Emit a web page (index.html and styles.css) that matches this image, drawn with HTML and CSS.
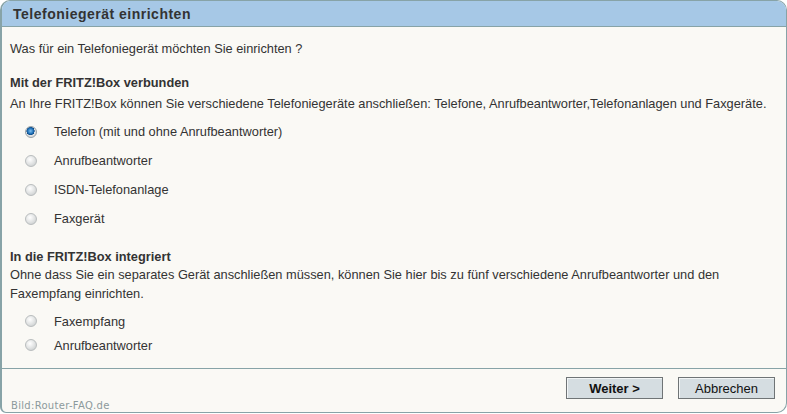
FILE: index.html
```html
<!DOCTYPE html>
<html lang="de">
<head>
<meta charset="UTF-8">
<title>Telefoniegerät einrichten</title>
<link rel="stylesheet" href="styles.css">
</head>
<body>
<div class="dialog">
    <div class="dialog-head">Telefoniegerät einrichten</div>
    <form class="dialog-body">
        <p class="intro">Was für ein Telefoniegerät möchten Sie einrichten ?</p>

        <h2>Mit der FRITZ!Box verbunden</h2>
        <p>An Ihre FRITZ!Box können Sie verschiedene Telefoniegeräte anschließen: Telefone, Anrufbeantworter,Telefonanlagen und Faxgeräte.</p>
        <div class="options wide">
            <label><input type="radio" name="device" value="fon" checked> Telefon (mit und ohne Anrufbeantworter)</label>
            <label><input type="radio" name="device" value="tam"> Anrufbeantworter</label>
            <label><input type="radio" name="device" value="isdn"> ISDN-Telefonanlage</label>
            <label><input type="radio" name="device" value="fax"> Faxgerät</label>
        </div>

        <h2 class="tight">In die FRITZ!Box integriert</h2>
        <p>Ohne dass Sie ein separates Gerät anschließen müssen, können Sie hier bis zu fünf verschiedene Anrufbeantworter und den Faxempfang einrichten.</p>
        <div class="options">
            <label><input type="radio" name="device" value="faxint"> Faxempfang</label>
            <label><input type="radio" name="device" value="tamint"> Anrufbeantworter</label>
        </div>
    </form>
    <div class="dialog-foot">
        <span class="credit">Bild:Router-FAQ.de</span>
        <div class="buttons">
            <button type="button" class="btn btn-main">Weiter &gt;</button>
            <button type="button" class="btn">Abbrechen</button>
        </div>
    </div>
</div>
</body>
</html>
```

FILE: styles.css
```css
/* dialog frame */
body {
    margin: 0;
    font-family: "Liberation Sans", Arial, sans-serif;
    font-size: 12.8px;
    color: #333;
    background: #fff;
}
.dialog {
    width: 784px;
    height: 411px;
    border: 1px solid #87a3a7;
    border-left-width: 2px;
    border-radius: 10px 10px 10px 6px;
    background-color: #faf9f5;
    display: flex;
    flex-direction: column;
    overflow: hidden;
}
.dialog-head {
    flex: none;
    height: 25px;
    line-height: 26px;
    padding-left: 11px;
    background-color: #a6c8e6;
    border-bottom: 1px solid #87a3a7;
    font-size: 14px;
    font-weight: bold;
    color: #333;
    letter-spacing: 0.5px;
}
.dialog-body {
    flex: 1;
    min-height: 0;
    padding: 0 4px 0 8px;
}
p {
    margin: 0;
    line-height: 19px;
}
.intro {
    margin-top: 12px;
    margin-bottom: 15px;
}
h2 {
    margin: 0 0 2px;
    font-size: 12.8px;
    font-weight: bold;
    line-height: 19px;
}
h2.tight {
    margin-bottom: -1px;
}
.options {
    display: flex;
    flex-direction: column;
    padding: 6px 0 14px 13px;
}
.options label {
    display: flex;
    align-items: center;
    height: 24px;
}
.options.wide label {
    height: 29px;
}
.options.wide {
    padding-top: 4px;
    padding-bottom: 14px;
}

/* radio look */
input[type="radio"] {
    appearance: none;
    -webkit-appearance: none;
    width: 12px;
    height: 12px;
    margin: 0 17px 0 2px;
    border-radius: 50%;
    border: 1px solid #b9bdbe;
    background: radial-gradient(circle at 40% 35%, #ffffff 0%, #e2e4e4 50%, #c2c6c7 100%);
}
input[type="radio"]:checked {
    border-color: #9aa3a8;
    background: radial-gradient(circle at 45% 40%, #7fc0f0 0%, #1d6fb6 35%, #0d4a86 48%, #e4e6e7 52%, #c5c9cb 100%);
}

/* footer with buttons */
.dialog-foot {
    flex: none;
    height: 43px;
    border-top: 1px solid #87a3a7;
    display: flex;
    justify-content: space-between;
    padding: 0 11px 0 9px;
}
.credit {
    align-self: flex-end;
    font-family: "DejaVu Sans", sans-serif;
    font-size: 10px;
    line-height: 12px;
    color: #8c9a9c;
    letter-spacing: 0.3px;
}
.buttons {
    display: flex;
    gap: 15px;
    padding-top: 8px;
}
.btn {
    width: 97px;
    height: 22px;
    padding: 0;
    font-family: "Liberation Sans", Arial, sans-serif;
    font-size: 13px;
    color: #111;
    background-color: #d5dde1;
    border: 1px solid #6f7476;
    box-shadow: inset 1px 1px 0 #f2f5f6;
}
.btn-main {
    font-weight: bold;
}
```
